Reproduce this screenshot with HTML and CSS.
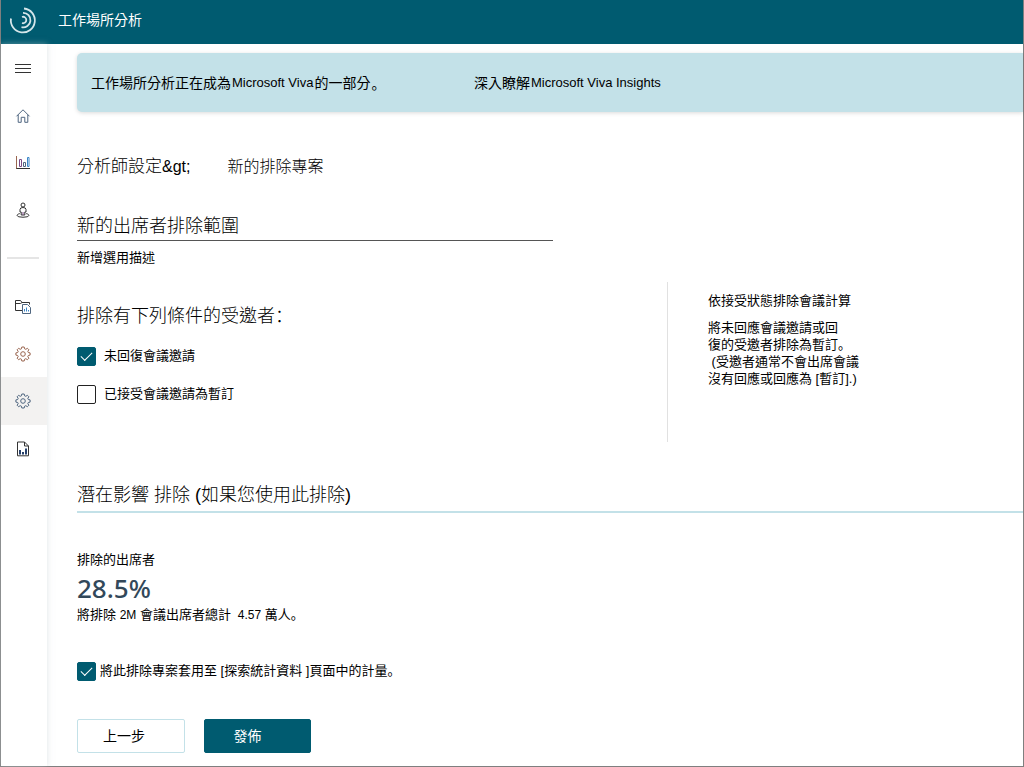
FILE: index.html
```html
<!DOCTYPE html>
<html lang="zh-Hant">
<head>
<meta charset="utf-8">
<meta name="viewport" content="width=device-width, initial-scale=1">
<title>工作場所分析</title>
<link rel="stylesheet" href="styles.css">
</head>
<body>
<div class="app">
  <header class="topbar">
    <svg class="logo" viewBox="0 0 28 28" aria-hidden="true">
      <path d="M2 12.5A12 12 0 1 0 15 2.5" stroke-width="1.8"/>
      <path d="M14 6.8A7.3 7.3 0 1 1 12.5 21.2" stroke-width="1.8"/>
      <path d="M13 11A3.2 3.2 0 1 1 13 17" stroke-width="1.8"/>
    </svg>
    <span class="brand">工作場所分析</span>
  </header>
  <div class="body">
    <nav class="rail" aria-label="主選單">
      <button class="rail-item" type="button" aria-label="選單">
        <svg class="icon" viewBox="0 0 16 16"><path d="M0 3.5H16M0 7.5H16M0 11.5H16"/></svg>
      </button>
      <a class="rail-item" href="#" aria-label="首頁">
        <svg class="icon" viewBox="0 0 16 16"><path class="steel" d="M1.5 8.3L8 1.8L14.5 8.3M3.2 6.8V14.3H6.2V9.3H9.8V14.3H12.8V6.8"/></svg>
      </a>
      <a class="rail-item" href="#" aria-label="統計">
        <svg class="icon" viewBox="0 0 16 16"><path class="rust" d="M1.5 1V14"/><path d="M1.5 13.5H15"/><path class="violet" d="M4.5 4.5H6.5V11.5H4.5Z"/><path class="steel" d="M8.5 7.5H10.5V11.5H8.5Z"/><path class="blue" d="M12.5 2.5H14V11.5H12.5Z"/></svg>
      </a>
      <a class="rail-item" href="#" aria-label="人員">
        <svg class="icon" viewBox="0 0 16 16"><circle cx="8" cy="3" r="2"/><path d="M5 10V7.5Q5 5.5 8 5.5T11 7.5V10H9.8V13H6.2V10Z"/><path class="violet" d="M8 10V13"/><path d="M4.8 11.6C1.5 12.3 1.3 14 4 14.8Q8 15.7 12 14.8C14.7 14 14.5 12.3 11.2 11.6"/></svg>
      </a>
      <hr class="rail-line">
      <a class="rail-item" href="#" aria-label="報表資料夾">
        <svg class="icon" viewBox="0 0 16 16"><path d="M7 11.5H.5V1.5H5.5L7 3.5H14.5V5.5M.5 4.5H5.5L7 3.5"/><path class="steel" d="M7.5 5.5H12.5L15.5 8.5V14.5H7.5Z"/><path class="blue" d="M9.5 12.5V10M11.5 12.5V8.5M13.5 12.5V11"/></svg>
      </a>
      <a class="rail-item rust" href="#" aria-label="系統設定">
        <svg class="icon" viewBox="0 0 16 16"><path d="M6.8 1H9.2L9.6 2.8L10.8 3.3L12.4 2.3L13.9 3.8L12.8 5.3L13.3 6.5L15.1 6.9V9.1L13.3 9.5L12.8 10.7L13.9 12.2L12.4 13.7L10.8 12.7L9.6 13.2L9.2 15H6.8L6.4 13.2L5.2 12.7L3.6 13.7L2.1 12.2L3.2 10.7L2.7 9.5L.9 9.1V6.9L2.7 6.5L3.2 5.3L2.1 3.8L3.6 2.3L5.2 3.3L6.4 2.8Z"/><circle cx="8" cy="8" r="2.3"/></svg>
      </a>
      <a class="rail-item active steel" href="#" aria-label="分析師設定" aria-current="page">
        <svg class="icon" viewBox="0 0 16 16"><path d="M6.8 1H9.2L9.6 2.8L10.8 3.3L12.4 2.3L13.9 3.8L12.8 5.3L13.3 6.5L15.1 6.9V9.1L13.3 9.5L12.8 10.7L13.9 12.2L12.4 13.7L10.8 12.7L9.6 13.2L9.2 15H6.8L6.4 13.2L5.2 12.7L3.6 13.7L2.1 12.2L3.2 10.7L2.7 9.5L.9 9.1V6.9L2.7 6.5L3.2 5.3L2.1 3.8L3.6 2.3L5.2 3.3L6.4 2.8Z"/><circle cx="8" cy="8" r="2.3"/></svg>
      </a>
      <a class="rail-item" href="#" aria-label="報表">
        <svg class="icon" viewBox="0 0 16 16"><path d="M2.5 1H9.5L13.5 5V14.8H2.5ZM9.5 1V5H13.5"/><path class="bars" d="M5 13.5V9M8 13.5V11M11 13.5V7.5"/></svg>
      </a>
    </nav>
    <main class="content">
      <div class="banner">
        <span class="banner-text">工作場所分析正在成為 <span class="latin">Microsoft Viva</span>的一部分<span class="punct" lang="zh-Hans">。</span></span>
        <a class="banner-link" href="#">深入瞭解 <span class="latin">Microsoft Viva Insights</span></a>
      </div>
      <div class="crumbs">
        <a class="crumb-parent" href="#">分析師設定<span class="entity">&amp;gt;</span></a>
        <span>新的排除專案</span>
      </div>
      <div class="fields">
        <input class="name" type="text" value="新的出席者排除範圍" aria-label="名稱">
        <input class="desc" type="text" value="新增選用描述" aria-label="描述">
      </div>
      <section class="rules">
        <div class="choices">
          <h2 class="heading">排除有下列條件的受邀者<span class="punct" lang="zh-Hans">：</span></h2>
          <label class="option"><input class="check" type="checkbox" checked>未回復會議邀請</label>
          <label class="option"><input class="check" type="checkbox">已接受會議邀請為暫訂</label>
        </div>
        <aside class="help">
          <h3 class="help-title">依接受狀態排除會議計算</h3>
          <p class="help-text">將未回應會議邀請或回<br>復的受邀者排除為暫訂<span class="punct" lang="zh-Hans">。</span><br>&nbsp;(受邀者通常不會出席會議<br>沒有回應或回應為 [暫訂].)</p>
        </aside>
      </section>
      <section class="impact">
        <h2 class="heading impact-title">潛在影響 排除 (如果您使用此排除)</h2>
        <p class="stat-label">排除的出席者</p>
        <p class="stat">28.5%</p>
        <p class="stat-note">將排除 <span class="figure">2M</span> 會議出席者總計 <span class="figure">&nbsp;4.57</span> 萬人<span class="punct" lang="zh-Hans">。</span></p>
      </section>
      <label class="option apply"><input class="check" type="checkbox" checked><span>將此排除專案套用至 [探索統計資料 ]頁面中的計量<span class="punct" lang="zh-Hans">。</span></span></label>
      <div class="actions">
        <button class="btn" type="button">上一步</button>
        <button class="btn primary" type="button">發佈</button>
      </div>
    </main>
  </div>
</div>
</body>
</html>
```

FILE: styles.css
```css
* {
  box-sizing: border-box;
}

body {
  margin: 0;
  font: 400 13px/18px "Liberation Sans", "Noto Sans CJK TC", sans-serif;
  color: #000;
  background: #fff;
}

h2, h3, p {
  margin: 0;
  font-weight: 400;
}

a {
  color: inherit;
  text-decoration: none;
}

button, input {
  margin: 0;
  font: inherit;
  color: inherit;
}

.app {
  display: flex;
  flex-direction: column;
  min-height: 100vh;
  border: solid #7f7f7f;
  border-width: 0 1px 1px;
}

.topbar {
  display: flex;
  align-items: center;
  gap: 21px;
  height: 44px;
  padding: 0 8px 4px;
  background: #005b70;
  color: #fff;
}

.logo {
  width: 28px;
  height: 28px;
  fill: none;
  stroke: #d5e6ea;
}

.brand {
  font-size: 14px;
}

.body {
  display: flex;
  flex: 1;
}

.rail {
  display: flex;
  flex-direction: column;
  flex: none;
  width: 46px;
  padding-top: 1px;
  background: #fff;
  box-shadow: 0 0 6px rgba(190, 200, 205, 0.5);
}

.rail-item {
  display: flex;
  align-items: center;
  justify-content: center;
  height: 47px;
  padding: 0 3px 0 0;
  border: 0;
  background: none;
  color: #333;
}

.rail-item.active {
  height: 48px;
  background: #f3f2f1;
}

.rail-line {
  width: 32px;
  margin: 24px 6px;
  border: 0;
  border-top: 2px solid #e5e5e5;
}

.icon {
  width: 16px;
  height: 16px;
  fill: none;
  stroke: currentColor;
}

.rust {
  color: #9a6650;
  stroke: #9a6650;
}

.steel {
  color: #4f6680;
  stroke: #4f6680;
}

.violet {
  stroke: #7b4a86;
}

.blue {
  stroke: #3a86c8;
}

.bars {
  stroke: #26406b;
  stroke-width: 2;
}

.content {
  flex: 1;
  min-width: 0;
  padding: 9px 0 12px 30px;
}

.banner {
  display: grid;
  grid-template-columns: 383px 1fr;
  align-items: center;
  height: 59px;
  padding: 0 14px;
  border-radius: 5px 0 0 5px;
  background: #c3e1e8;
  box-shadow: 0 1px 4px rgba(0, 0, 0, 0.15);
  font-size: 14px;
}

.banner-text,
.banner-link {
  display: flex;
  gap: 1px;
}

.latin {
  font-size: 13px;
}

.punct {
  font-family: "Noto Sans CJK SC", sans-serif;
  line-height: 1;
}

.banner .punct {
  line-height: inherit;
}

.crumbs {
  display: flex;
  gap: 37px;
  margin-top: 43px;
  font-size: 16px;
  font-weight: 300;
  line-height: 24px;
}

.crumb-parent {
  font-size: 17px;
}

.entity {
  font-size: 16px;
}

.fields {
  display: flex;
  flex-direction: column;
  width: 476px;
  max-width: 100%;
  margin-top: 31px;
}

.name {
  height: 31px;
  padding: 0 0 2px;
  border: 0;
  border-bottom: 1px solid #555;
  font-size: 18px;
  font-weight: 300;
}

.desc {
  height: 20px;
  margin-top: 5px;
  padding: 0;
  border: 0;
}

.rules {
  display: grid;
  grid-template-columns: 590px 1fr;
  margin-top: 16px;
}

.choices {
  padding-top: 21px;
}

.heading {
  font-size: 18px;
  font-weight: 300;
  line-height: 26px;
}

.option {
  display: flex;
  align-items: center;
  gap: 8px;
  width: max-content;
  height: 38px;
}

.heading + .option {
  margin-top: 8px;
}

.check {
  display: grid;
  place-items: center;
  appearance: none;
  width: 19px;
  height: 19px;
  border: 1px solid #222;
  border-radius: 2px;
  background: #fff;
}

.check:checked {
  border-color: #005b70;
  background: #005b70;
}

.check:checked::before {
  content: "";
  width: 10px;
  height: 5px;
  margin-bottom: 3px;
  border: solid #fff;
  border-width: 0 0 1px 1px;
  transform: rotate(-45deg);
}

.help {
  height: 160px;
  padding: 10px 0 0 40px;
  border-left: 1px solid #e1e1e1;
}

.help-title {
  font-size: 13px;
}

.help-text {
  margin-top: 9px;
  line-height: 17px;
}

.impact {
  margin-top: 40px;
}

.impact-title {
  padding-bottom: 3px;
  border-bottom: 2px solid #c3e1e8;
}

.stat-label {
  margin-top: 38px;
}

.stat {
  margin-top: 1px;
  font: 500 26px/36px "Noto Sans", sans-serif;
  color: #32485a;
}

.figure {
  font-size: 12px;
}

.apply {
  gap: 4px;
  margin-top: 28px;
}

.actions {
  display: flex;
  gap: 19px;
  margin-top: 29px;
}

.btn {
  width: 108px;
  height: 34px;
  padding: 0 14px 0 0;
  border: 1px solid #c3e1e8;
  border-radius: 2px;
  background: #fff;
  font-size: 14px;
}

.primary {
  width: 107px;
  padding-right: 20px;
  border-color: #005b70;
  background: #005b70;
  color: #fff;
}
```
